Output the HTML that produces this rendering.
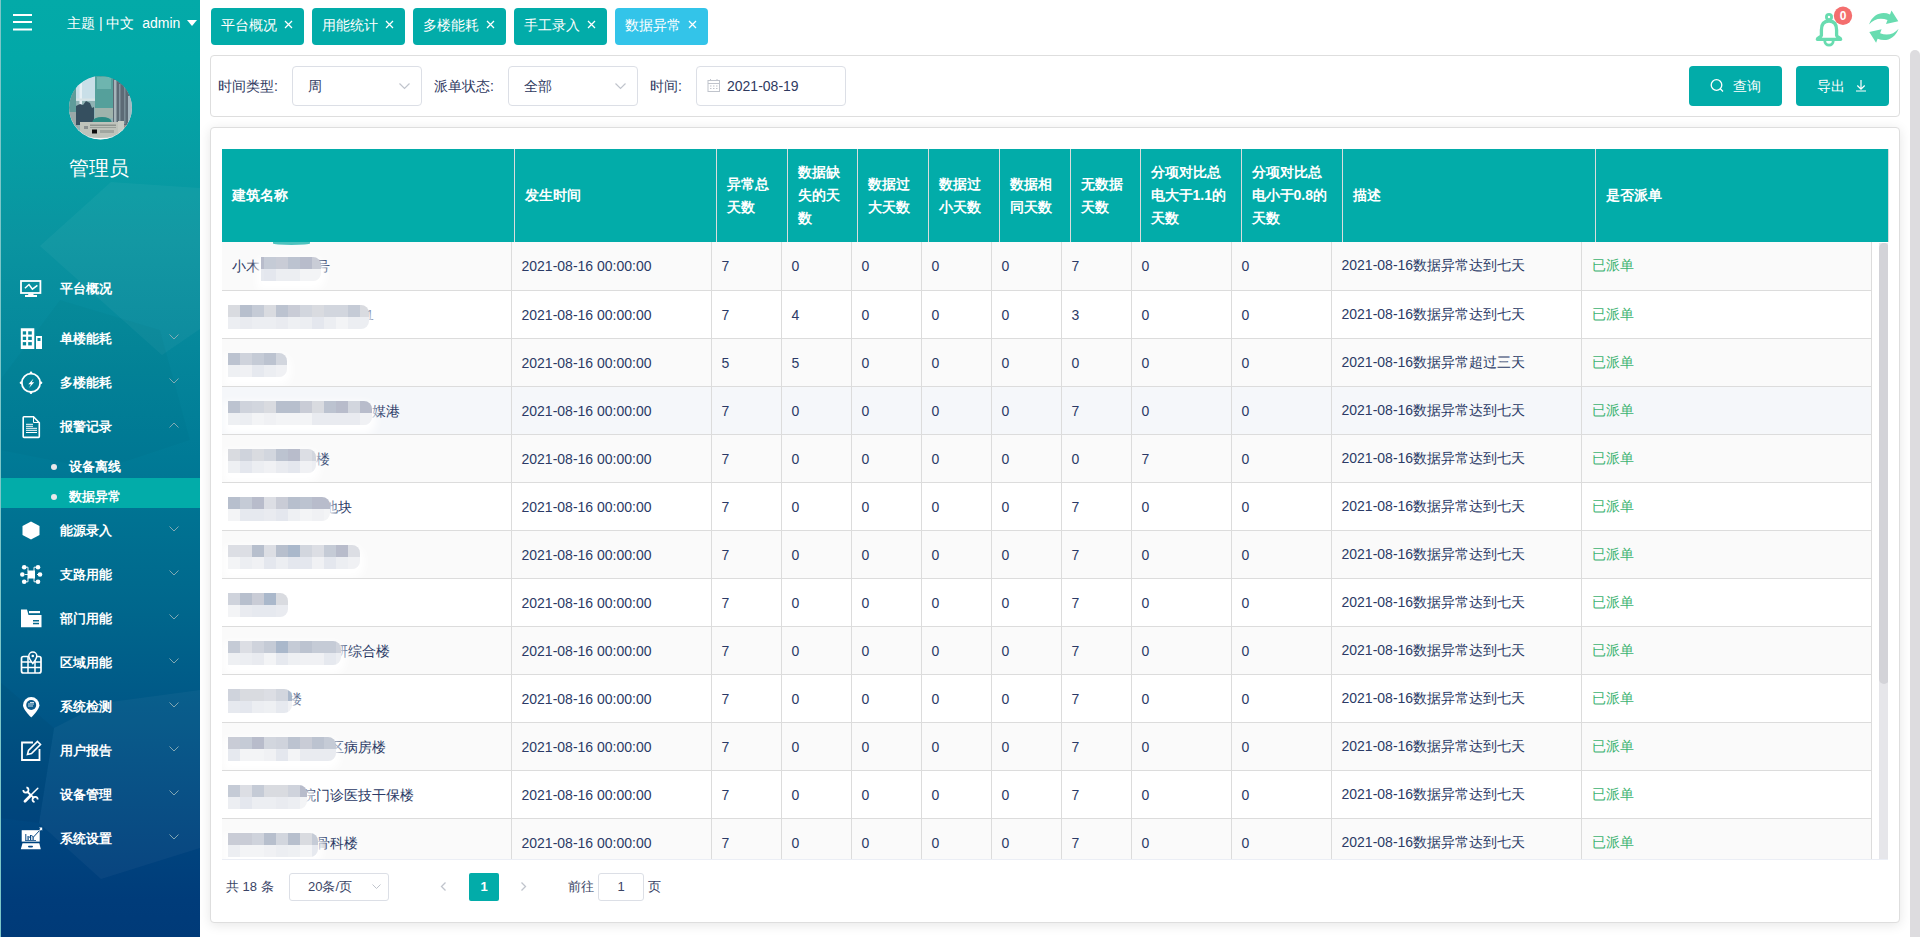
<!DOCTYPE html>
<html><head><meta charset="utf-8">
<style>
*{box-sizing:border-box;margin:0;padding:0}
html,body{width:1920px;height:937px;overflow:hidden;background:#fff;font-family:"Liberation Sans",sans-serif;color:#333}
.abs{position:absolute}
#side{position:absolute;left:0;top:0;width:200px;height:937px;background:linear-gradient(180deg,#03aaa8 0px,#02a8a8 60px,#0a94a0 240px,#007a96 457px,#00668c 615px,#004f84 760px,#003c7a 900px,#003a78 937px);overflow:hidden;border-left:1px solid #7cc6c8}
#side .t{position:absolute;color:#fff;font-size:13px;line-height:16px;white-space:nowrap;font-weight:bold}
.mi{position:absolute;left:0;width:200px;height:20px}
.mi .lab{position:absolute;left:60px;top:0;color:#fff;font-size:13px;line-height:20px;white-space:nowrap}
.mi svg.ic{position:absolute;left:20px;top:-1px}
.mi .chev{position:absolute;left:170px;top:5px;width:8px;height:8px}
.tab{position:absolute;top:8px;height:37px;border-radius:4px;background:#02aca9;color:#fff;font-size:14px;line-height:35px;padding-left:10px;white-space:nowrap}
.tab .x{position:absolute;top:0;font-size:13px}
.card{position:absolute;background:#fff;border:1px solid #dedede;border-radius:4px}
.lbl{position:absolute;top:77px;font-size:14px;line-height:18px;color:#2f3a5f;white-space:nowrap}
.inp{position:absolute;top:66px;height:40px;border:1px solid #dcdfe6;border-radius:4px;font-size:14px;color:#2f3a5f;line-height:38px;white-space:nowrap}
.btn{position:absolute;top:66px;height:40px;border-radius:4px;background:#02aca9;color:#fff;font-size:14px;line-height:40px;white-space:nowrap}
table{border-collapse:collapse;table-layout:fixed}
#th{position:absolute;left:222px;top:149px;width:1666px;height:93px}
#th td{background:#02aca9;color:#fff;font-weight:bold;font-size:14px;line-height:23px;border-right:1px solid #d9dddd;padding:0 10px;vertical-align:middle;height:93px}
#tb{position:absolute;left:0;top:0;width:1649px}
#tb td{font-size:14px;color:#2b3a66;height:48px;border-bottom:1px solid #dcdcdc;border-right:1px solid #dcdcdc;padding:1px 10px 0 10px;white-space:nowrap;overflow:hidden}
#tb tr:nth-child(odd) td{background:#fafafa}
#tb td.g{color:#3cb371}
#tb td.c1{position:relative}
.nm{position:absolute;top:1px;line-height:47px}
.mz{position:absolute;top:14px;height:24px;display:block;border-radius:0 8px 8px 0;overflow:hidden;box-shadow:0 5px 8px 4px rgba(255,255,255,1)}
.mz i{position:absolute;top:0;height:12px;display:block}
#tb tr.hv td{background:#f5f7fa}
#tb tr:first-child .mz{top:15px}
</style></head><body>
<div id="side">
  <svg class="abs" style="left:-1px;top:0" width="200" height="937" viewBox="0 0 200 937">
    <!-- background facets -->
    <polygon points="40,246 111,182 200,188 200,329 162,355" fill="#ffffff" opacity="0.04"/>
    <polygon points="0,380 60,300 160,330 190,440 100,470 0,450" fill="#000000" opacity="0.02"/>
    <polygon points="54,728 103,703 200,690 200,848 101,879 39,823" fill="#ffffff" opacity="0.035"/>
    <polygon points="0,682 54,728 39,823 0,818" fill="#000000" opacity="0.03"/>
    <!-- hamburger -->
    <rect x="13" y="14" width="19" height="2" fill="#fff"/>
    <rect x="13" y="21" width="19" height="2" fill="#fff"/>
    <rect x="13" y="28.5" width="19" height="2" fill="#fff"/>
    <!-- admin caret -->
    <polygon points="187,20 197,20 192,26" fill="#fff"/>
    <!-- avatar -->
    <defs><filter id="bl" x="-5%" y="-5%" width="110%" height="110%"><feGaussianBlur stdDeviation="0.7"/></filter><clipPath id="av"><circle cx="100.5" cy="107.5" r="31.5"/></clipPath></defs>
    <circle cx="100.5" cy="108" r="31.4" fill="#f4f8f8"/>
    <g clip-path="url(#av)"><g filter="url(#bl)">
      <rect x="68" y="75" width="66" height="66" fill="#8fb2b4"/>
      <rect x="68" y="75" width="8" height="40" fill="#5f9c9a"/>
      <rect x="68" y="112" width="10" height="30" fill="#9aa8a8"/>
      <rect x="76" y="75" width="19" height="26" fill="#c9dfe8"/>
      <rect x="79.5" y="80" width="2.5" height="45" fill="#e6f0f4"/>
      <rect x="76" y="98.5" width="19" height="2" fill="#d8e4e6"/>
      <path d="M76,125 V106 l4,-2 l3,1 l3,-4 l4,2 l2,5 l2,-1 V125z" fill="#34505e"/>
      <rect x="95" y="75" width="18" height="36" fill="#55a09b"/>
      <rect x="97" y="77" width="14" height="12" fill="#79bdb8" opacity="0.7"/>
      <rect x="95" y="108" width="18" height="10" fill="#9fb3ac"/>
      <rect x="113" y="75" width="20" height="50" fill="#5b6b74"/>
      <rect x="114" y="80" width="2.5" height="45" fill="#a6b4ba"/>
      <rect x="119" y="84" width="1.5" height="40" fill="#8496a0"/>
      <rect x="124" y="84" width="1.5" height="40" fill="#7a8c96"/>
      <rect x="128" y="96" width="4" height="28" fill="#a4b8c0"/>
      <ellipse cx="102" cy="121.5" rx="9.5" ry="4.5" fill="#2b8a84"/>
      <rect x="80" y="122" width="38" height="16" fill="#bfc3bb"/>
      <rect x="90" y="124.5" width="26" height="1.5" fill="#8e948e"/>
      <rect x="90" y="127" width="26" height="1" fill="#9aa09a"/>
      <rect x="84" y="126" width="4" height="3" fill="#8a9090"/>
      <rect x="92" y="129.5" width="5" height="4" fill="#111"/>
      <rect x="100" y="130" width="14" height="3" fill="#a0a6a0"/>
      <rect x="118" y="121" width="6" height="12" fill="#c8ccc4"/>
      <rect x="124" y="125" width="5" height="6" fill="#b06060" opacity="0.5"/>
    </g></g>
    <path d="M86,136.5 Q100.5,142 115,136.5 Q100.5,139.5 86,136.5z" fill="#fff" opacity="0.9"/>
    <!-- icon 1 monitor -->
    <rect x="21" y="281" width="19.4" height="12" fill="none" stroke="#fff" stroke-width="1.8"/>
    <polyline points="24.9,288.2 29,284.5 32.4,289.2 37.4,285.3" fill="none" stroke="#fff" stroke-width="1.5"/>
    <rect x="28.2" y="293.5" width="5.3" height="2" fill="#fff"/>
    <rect x="25" y="295" width="12" height="2" fill="#fff"/>
    <!-- icon 2 building -->
    <path d="M20.8,328.3h13.5v20.7h-13.5z M36,336h6v13h-6z" fill="#fff"/>
    <g fill="#07879a">
      <rect x="22.8" y="331.3" width="3.3" height="3.3"/><rect x="28.2" y="331.3" width="3.6" height="3.3"/>
      <rect x="22.8" y="336.7" width="3.3" height="3.3"/><rect x="28.2" y="336.7" width="3.6" height="3.3"/>
      <rect x="22.8" y="342.1" width="3.3" height="3.3"/><rect x="28.2" y="342.1" width="3.6" height="3.3"/>
      <rect x="37.5" y="338" width="3" height="3"/>
    </g>
    <!-- icon 3 circle bolt -->
    <circle cx="31" cy="382.8" r="9.2" fill="none" stroke="#fff" stroke-width="1.8"/>
    <circle cx="31" cy="372.8" r="1.3" fill="#fff"/><circle cx="31" cy="392.8" r="1.3" fill="#fff"/>
    <circle cx="21" cy="382.8" r="1.3" fill="#fff"/><circle cx="41" cy="382.8" r="1.3" fill="#fff"/>
    <polygon points="33.6,378.5 28.3,384.2 30.9,384.2 29,388 34.2,382.2 31.6,382.2" fill="#fff"/>
    <!-- icon 4 document -->
    <path d="M24,416.8h9.5l5.8,6v13.8a0.8,0.8 0 0 1 -0.8,0.8h-14.5a0.8,0.8 0 0 1 -0.8,-0.8v-19a0.8,0.8 0 0 1 0.8,-0.8z" fill="none" stroke="#fff" stroke-width="1.6"/>
    <path d="M33.5,417v5.5h5.5" fill="none" stroke="#fff" stroke-width="1"/>
    <g stroke="#fff" stroke-width="1"><line x1="26" y1="424.3" x2="33" y2="424.3"/><line x1="26" y1="426.3" x2="33" y2="426.3"/><line x1="26" y1="428.3" x2="37" y2="428.3"/><line x1="26" y1="430.3" x2="37" y2="430.3"/><line x1="26" y1="432.5" x2="37" y2="432.5"/></g>
    <!-- submenu active bg -->
    <rect x="0" y="478" width="200" height="30" fill="#02aca9"/>
    <circle cx="54" cy="467" r="3" fill="#e8e8ea"/>
    <circle cx="54" cy="497" r="3" fill="#e8e8ea"/>
    <!-- icon 5 hexagon -->
    <polygon points="31,521.5 39.5,526 39.5,535 31,539.5 22.5,535 22.5,526" fill="#fff"/>
    <!-- icon 6 network -->
    <g fill="#fff">
      <rect x="27.5" y="570.5" width="7.5" height="8"/>
      <circle cx="24.2" cy="567.2" r="2.3"/><circle cx="38" cy="567.2" r="2.3"/>
      <circle cx="22.3" cy="574.5" r="2.3"/><circle cx="40" cy="574.5" r="2.3"/>
      <circle cx="24.2" cy="581.8" r="2.3"/><circle cx="38" cy="581.8" r="2.3"/>
    </g>
    <path d="M25,567.2h3v4 M37,567.2h-3v4 M25,574.5h3 M37,574.5h3 M25,581.8h3v-4 M37,581.8h-3v-4" fill="none" stroke="#fff" stroke-width="0.9"/>
    <!-- icon 7 folder -->
    <path d="M21,609.5h6l1.5,5.5h13v12.3h-20.5z" fill="#fff"/>
    <rect x="29" y="611" width="11" height="2.2" fill="#fff"/>
    <rect x="33" y="620" width="6" height="1.5" fill="#086b8e"/><rect x="33" y="622.8" width="6" height="1.5" fill="#086b8e"/>
    <!-- icon 8 grid pin -->
    <rect x="21.5" y="656.5" width="19.5" height="16.5" rx="2" fill="none" stroke="#fff" stroke-width="1.7"/>
    <g stroke="#fff" stroke-width="1.5"><line x1="28" y1="657" x2="28" y2="673"/><line x1="35" y1="657" x2="35" y2="673"/><line x1="21.5" y1="662" x2="41" y2="662"/><line x1="21.5" y1="667.5" x2="41" y2="667.5"/></g>
    <path d="M32.8,652 a4,4 0 0 1 4,4 c0,2.5 -4,7.5 -4,7.5 c0,0 -4,-5 -4,-7.5 a4,4 0 0 1 4,-4z" fill="#075f8c" stroke="#fff" stroke-width="1.5"/>
    <circle cx="32.8" cy="656" r="1.3" fill="#fff"/>
    <!-- icon 9 location pin -->
    <path d="M31.2,697 a8.2,8.2 0 0 1 8.2,8.2 c0,4.5 -8.2,12.2 -8.2,12.2 c0,0 -8.2,-7.7 -8.2,-12.2 a8.2,8.2 0 0 1 8.2,-8.2z" fill="#fff"/>
    <circle cx="31.2" cy="705" r="5" fill="#0b5a8a"/>
    <path d="M28,704h6 M28,706h5 M30,702.5h4" stroke="#fff" stroke-width="0.8"/>
    <!-- icon 10 edit -->
    <path d="M33,742.5h-11v17.5h17.5v-11" fill="none" stroke="#fff" stroke-width="1.8"/>
    <path d="M37.5,741.5l3,3l-9,9l-4,1l1,-4z" fill="none" stroke="#fff" stroke-width="1.6"/>
    <!-- icon 11 tools -->
    <path d="M26.8,791.3 L34.2,798.4" stroke="#fff" stroke-width="1.9"/>
    <path d="M23.3,789.9 A2.6,2.6 0 1 0 26.4,787.4" fill="none" stroke="#fff" stroke-width="1.7"/>
    <path d="M37.7,799.5 A2.6,2.6 0 1 0 34.6,802.0" fill="none" stroke="#fff" stroke-width="1.7"/>
    <path d="M37.8,788.3 L31,795" stroke="#fff" stroke-width="1.5" stroke-linecap="round"/>
    <path d="M30.2,796 L25,801.2" stroke="#fff" stroke-width="2.8" stroke-linecap="round"/>
    <!-- icon 12 monitor chart -->
    <rect x="21.7" y="830.2" width="18" height="11.4" fill="#fff"/>
    <g fill="#0a4a85">
      <rect x="25.3" y="834" width="1" height="6"/><rect x="27.5" y="836" width="1.2" height="4"/><rect x="30" y="835" width="1.2" height="5"/><rect x="32.5" y="837" width="1.2" height="3"/>
      <rect x="25" y="840" width="11" height="0.8"/>
    </g>
    <path d="M29,837.5 L31.5,835.5 L33.5,837 L40,830" fill="none" stroke="#0a4a85" stroke-width="1"/>
    <path d="M39.5,830.5 L41.2,828.8" stroke="#fff" stroke-width="1.2"/>
    <polygon points="39,827.5 42.2,827.5 42.2,830.7" fill="#fff"/>
    <polygon points="22.5,843.3 39.3,843.3 40.8,849.3 20.8,849.3" fill="#fff"/>
    <rect x="28" y="845.8" width="5" height="1.6" rx="0.8" fill="#0a4a85"/>
    <!-- chevrons -->
    <g fill="none" stroke="#8fb0b8" stroke-width="1" opacity="0.9">
      <polyline points="169.5,334.5 174,339 178.5,334.5"/>
      <polyline points="169.5,378.5 174,383 178.5,378.5"/>
      <polyline points="169.5,427.5 174,423 178.5,427.5"/>
      <polyline points="169.5,526.5 174,531 178.5,526.5"/>
      <polyline points="169.5,570.5 174,575 178.5,570.5"/>
      <polyline points="169.5,614.5 174,619 178.5,614.5"/>
      <polyline points="169.5,658.5 174,663 178.5,658.5"/>
      <polyline points="169.5,702.5 174,707 178.5,702.5"/>
      <polyline points="169.5,746.5 174,751 178.5,746.5"/>
      <polyline points="169.5,790.5 174,795 178.5,790.5"/>
      <polyline points="169.5,834.5 174,839 178.5,834.5"/>
    </g>
  </svg>
  <div class="t" style="left:66px;top:14px;font-size:14px;line-height:18px;font-weight:normal">主题 | 中文&nbsp;&nbsp;admin</div>
  <div class="t" style="left:68px;top:156px;font-size:20px;line-height:24px;font-weight:normal">管理员</div>
  <div class="t" style="left:59px;top:281px">平台概况</div>
  <div class="t" style="left:59px;top:331px">单楼能耗</div>
  <div class="t" style="left:59px;top:375px">多楼能耗</div>
  <div class="t" style="left:59px;top:419px">报警记录</div>
  <div class="t" style="left:68px;top:459px">设备离线</div>
  <div class="t" style="left:68px;top:489px">数据异常</div>
  <div class="t" style="left:59px;top:523px">能源录入</div>
  <div class="t" style="left:59px;top:567px">支路用能</div>
  <div class="t" style="left:59px;top:611px">部门用能</div>
  <div class="t" style="left:59px;top:655px">区域用能</div>
  <div class="t" style="left:59px;top:699px">系统检测</div>
  <div class="t" style="left:59px;top:743px">用户报告</div>
  <div class="t" style="left:59px;top:787px">设备管理</div>
  <div class="t" style="left:59px;top:831px">系统设置</div>
</div>
<!-- tabs -->
<div class="tab" style="left:211px;width:93px">平台概况<svg class="x" style="left:73px;top:12px" width="9" height="9" viewBox="0 0 9 9"><path d="M1,1L8,8M8,1L1,8" stroke="#fff" stroke-width="1.3"/></svg></div>
<div class="tab" style="left:312px;width:93px">用能统计<svg class="x" style="left:73px;top:12px" width="9" height="9" viewBox="0 0 9 9"><path d="M1,1L8,8M8,1L1,8" stroke="#fff" stroke-width="1.3"/></svg></div>
<div class="tab" style="left:413px;width:93px">多楼能耗<svg class="x" style="left:73px;top:12px" width="9" height="9" viewBox="0 0 9 9"><path d="M1,1L8,8M8,1L1,8" stroke="#fff" stroke-width="1.3"/></svg></div>
<div class="tab" style="left:514px;width:93px">手工录入<svg class="x" style="left:73px;top:12px" width="9" height="9" viewBox="0 0 9 9"><path d="M1,1L8,8M8,1L1,8" stroke="#fff" stroke-width="1.3"/></svg></div>
<div class="tab" style="left:615px;width:93px;background:#33c4e9">数据异常<svg class="x" style="left:73px;top:12px" width="9" height="9" viewBox="0 0 9 9"><path d="M1,1L8,8M8,1L1,8" stroke="#fff" stroke-width="1.3"/></svg></div>

<!-- filter card -->
<div class="card" style="left:210px;top:55px;width:1690px;height:62px"></div>
<div class="lbl" style="left:218px">时间类型:</div>
<div class="inp" style="left:292px;width:130px;padding-left:15px">周</div>
<div class="lbl" style="left:434px">派单状态:</div>
<div class="inp" style="left:508px;width:130px;padding-left:15px">全部</div>
<div class="lbl" style="left:650px">时间:</div>
<div class="inp" style="left:696px;width:150px;padding-left:30px">2021-08-19</div>
<div class="btn" style="left:1689px;width:93px;padding-left:44px">查询</div>
<div class="btn" style="left:1796px;width:93px;padding-left:21px">导出</div>
<svg class="abs" style="left:0;top:0" width="1920" height="130" viewBox="0 0 1920 130">
  <!-- select arrows -->
  <polyline points="399.5,83.5 404.5,88.5 409.5,83.5" fill="none" stroke="#c0c4cc" stroke-width="1.2"/>
  <polyline points="615.5,83.5 620.5,88.5 625.5,83.5" fill="none" stroke="#c0c4cc" stroke-width="1.2"/>
  <!-- calendar -->
  <rect x="708" y="80.5" width="11.5" height="11" fill="none" stroke="#c0c4cc" stroke-width="1"/>
  <line x1="708" y1="83.5" x2="719.5" y2="83.5" stroke="#c0c4cc" stroke-width="1"/>
  <line x1="710.5" y1="79" x2="710.5" y2="81" stroke="#c0c4cc"/><line x1="717" y1="79" x2="717" y2="81" stroke="#c0c4cc"/>
  <g fill="#c0c4cc"><rect x="710" y="85.5" width="1.5" height="1"/><rect x="713" y="85.5" width="1.5" height="1"/><rect x="716" y="85.5" width="1.5" height="1"/><rect x="710" y="88" width="1.5" height="1"/><rect x="713" y="88" width="1.5" height="1"/><rect x="716" y="88" width="1.5" height="1"/></g>
  <!-- search icon -->
  <circle cx="1716.5" cy="85" r="5.3" fill="none" stroke="#fff" stroke-width="1.3"/>
  <line x1="1720.3" y1="88.8" x2="1723" y2="91.5" stroke="#fff" stroke-width="1.3"/>
  <!-- download icon -->
  <path d="M1861,80v9 M1857.3,85.5l3.7,3.7l3.7,-3.7 M1856,91h10" fill="none" stroke="#fff" stroke-width="1.2"/>
  <!-- bell -->
  <path d="M1829,21 C1824,21 1821.4,24.5 1821.4,30 L1821.4,35.5 C1821.4,37 1817.3,38 1817.3,39.3 L1840.7,39.3 C1840.7,38 1836.6,37 1836.6,35.5 L1836.6,30 C1836.6,24.5 1834,21 1829,21 Z" fill="none" stroke="#68dcb0" stroke-width="3.3" stroke-linejoin="round"/>
  <circle cx="1829" cy="17" r="2.6" fill="none" stroke="#68dcb0" stroke-width="2.8"/>
  <path d="M1824.8,41 a4.2,4.2 0 0 0 8.4,0" fill="none" stroke="#68dcb0" stroke-width="2.8"/>
  <circle cx="1843" cy="15.7" r="9.2" fill="#f46e6e"/>
  <!-- refresh -->
  <path d="M1869,24.5 C1873,14 1882,11 1890,14.5 L1891.5,10.5 L1898.3,21.3 L1886,24 L1887.5,20 C1881,17.5 1874,18.5 1869,24.5 Z" fill="#68dcb0"/>
  <path d="M1898.6,28.7 C1894.6,39.2 1885.6,42.2 1877.6,38.7 L1876.1,42.7 L1869.3,31.9 L1881.6,29.2 L1880.1,33.2 C1886.6,35.7 1893.6,34.7 1898.6,28.7 Z" fill="#68dcb0"/>
</svg>
<div class="abs" style="left:1834px;top:7px;width:18px;text-align:center;color:#fff;font-size:12px;font-weight:bold;line-height:18px">0</div>
<!-- page scrollbar -->
<div class="abs" style="left:1910px;top:50px;width:10px;height:900px;border-radius:5px;background:#dddcdf"></div>
<!-- table card -->
<div class="card" style="left:210px;top:127px;width:1690px;height:796px;box-shadow:0 2px 12px rgba(0,0,0,.1)"></div>
<table id="th"><colgroup><col style="width:292px"><col style="width:202px"><col style="width:71px"><col style="width:70px"><col style="width:71px"><col style="width:71px"><col style="width:71px"><col style="width:70px"><col style="width:101px"><col style="width:101px"><col style="width:253px"><col style="width:293px"></colgroup>
<tr><td>建筑名称</td><td>发生时间</td><td>异常总天数</td><td>数据缺失的天数</td><td>数据过大天数</td><td>数据过小天数</td><td>数据相同天数</td><td>无数据天数</td><td>分项对比总电大于1.1的天数</td><td>分项对比总电小于0.8的天数</td><td>描述</td><td>是否派单</td></tr>
</table>
<div id="bw" style="position:absolute;left:222px;top:242px;width:1666px;height:618px;overflow:hidden;border-bottom:1px solid #ebeef5">
<table id="tb"><colgroup><col style="width:289px"><col style="width:200px"><col style="width:70px"><col style="width:70px"><col style="width:70px"><col style="width:70px"><col style="width:70px"><col style="width:70px"><col style="width:100px"><col style="width:100px"><col style="width:250px"><col style="width:290px"></colgroup>
<tbody>
<!--ROWS-->
<tr><td class="c1"><span class="nm" style="left:10px">小木</span><span class="nm" style="left:94px">号</span><b class="mz" style="left:39px;width:60px"><i style="left:0px;width:3px;background:#b8bccb"></i><i style="left:0px;top:12px;width:3px;background:#e6e9ef"></i><i style="left:3px;width:12px;background:#c5cbd6"></i><i style="left:3px;top:12px;width:12px;background:#e4e7ee"></i><i style="left:15px;width:12px;background:#c9ccd6"></i><i style="left:15px;top:12px;width:12px;background:#eceef2"></i><i style="left:27px;width:12px;background:#bcc3d0"></i><i style="left:27px;top:12px;width:12px;background:#eceef2"></i><i style="left:39px;width:12px;background:#b8bccb"></i><i style="left:39px;top:12px;width:12px;background:#f3f4f6"></i><i style="left:51px;width:9px;background:#c9ccd6"></i><i style="left:51px;top:12px;width:9px;background:#f3f4f6"></i></b></td><td>2021-08-16 00:00:00</td><td>7</td><td>0</td><td>0</td><td>0</td><td>0</td><td>7</td><td>0</td><td>0</td><td>2021-08-16数据异常达到七天</td><td class="g">已派单</td></tr>
<tr><td class="c1"><span class="nm" style="left:144px">1</span><b class="mz" style="left:6px;width:141px"><i style="left:0px;width:12px;background:#d9dbe0"></i><i style="left:0px;top:12px;width:12px;background:#eceef2"></i><i style="left:12px;width:12px;background:#b7bfcd"></i><i style="left:12px;top:12px;width:12px;background:#e9ebf0"></i><i style="left:24px;width:12px;background:#c5cbd6"></i><i style="left:24px;top:12px;width:12px;background:#eceef2"></i><i style="left:36px;width:12px;background:#d9dbe0"></i><i style="left:36px;top:12px;width:12px;background:#eceef2"></i><i style="left:48px;width:12px;background:#bcc3d0"></i><i style="left:48px;top:12px;width:12px;background:#e9ebf0"></i><i style="left:60px;width:12px;background:#c9ccd6"></i><i style="left:60px;top:12px;width:12px;background:#eef0f3"></i><i style="left:72px;width:12px;background:#d2d6de"></i><i style="left:72px;top:12px;width:12px;background:#eceef2"></i><i style="left:84px;width:12px;background:#d9dbe0"></i><i style="left:84px;top:12px;width:12px;background:#e4e7ee"></i><i style="left:96px;width:12px;background:#d2d6de"></i><i style="left:96px;top:12px;width:12px;background:#eceef2"></i><i style="left:108px;width:12px;background:#d2d6de"></i><i style="left:108px;top:12px;width:12px;background:#f3f4f6"></i><i style="left:120px;width:12px;background:#c5cbd6"></i><i style="left:120px;top:12px;width:12px;background:#eceef2"></i><i style="left:132px;width:9px;background:#d9dbe0"></i><i style="left:132px;top:12px;width:9px;background:#eceef2"></i></b></td><td>2021-08-16 00:00:00</td><td>7</td><td>4</td><td>0</td><td>0</td><td>0</td><td>3</td><td>0</td><td>0</td><td>2021-08-16数据异常达到七天</td><td class="g">已派单</td></tr>
<tr><td class="c1"><b class="mz" style="left:6px;width:59px"><i style="left:0px;width:12px;background:#bcc3d0"></i><i style="left:0px;top:12px;width:12px;background:#eef0f3"></i><i style="left:12px;width:12px;background:#cfd3dc"></i><i style="left:12px;top:12px;width:12px;background:#f0f1f4"></i><i style="left:24px;width:12px;background:#c5cbd6"></i><i style="left:24px;top:12px;width:12px;background:#e6e9ef"></i><i style="left:36px;width:12px;background:#bcc3d0"></i><i style="left:36px;top:12px;width:12px;background:#eceef2"></i><i style="left:48px;width:11px;background:#d2d6de"></i><i style="left:48px;top:12px;width:11px;background:#f0f1f4"></i></b></td><td>2021-08-16 00:00:00</td><td>5</td><td>5</td><td>0</td><td>0</td><td>0</td><td>0</td><td>0</td><td>0</td><td>2021-08-16数据异常超过三天</td><td class="g">已派单</td></tr>
<tr class="hv"><td class="c1"><span class="nm" style="left:150px">媒港</span><b class="mz" style="left:6px;width:144px"><i style="left:0px;width:12px;background:#bcc3d0"></i><i style="left:0px;top:12px;width:12px;background:#eef0f3"></i><i style="left:12px;width:12px;background:#cfd3dc"></i><i style="left:12px;top:12px;width:12px;background:#eceef2"></i><i style="left:24px;width:12px;background:#d2d6de"></i><i style="left:24px;top:12px;width:12px;background:#f3f4f6"></i><i style="left:36px;width:12px;background:#d9dbe0"></i><i style="left:36px;top:12px;width:12px;background:#f0f1f4"></i><i style="left:48px;width:12px;background:#b7bfcd"></i><i style="left:48px;top:12px;width:12px;background:#f3f4f6"></i><i style="left:60px;width:12px;background:#b7bfcd"></i><i style="left:60px;top:12px;width:12px;background:#f3f4f6"></i><i style="left:72px;width:12px;background:#c9ccd6"></i><i style="left:72px;top:12px;width:12px;background:#f3f4f6"></i><i style="left:84px;width:12px;background:#d9dbe0"></i><i style="left:84px;top:12px;width:12px;background:#e9ebf0"></i><i style="left:96px;width:12px;background:#bcc3d0"></i><i style="left:96px;top:12px;width:12px;background:#e9ebf0"></i><i style="left:108px;width:12px;background:#b8bccb"></i><i style="left:108px;top:12px;width:12px;background:#e9ebf0"></i><i style="left:120px;width:12px;background:#d2d6de"></i><i style="left:120px;top:12px;width:12px;background:#e9ebf0"></i><i style="left:132px;width:12px;background:#b8bccb"></i><i style="left:132px;top:12px;width:12px;background:#f0f1f4"></i></b></td><td>2021-08-16 00:00:00</td><td>7</td><td>0</td><td>0</td><td>0</td><td>0</td><td>7</td><td>0</td><td>0</td><td>2021-08-16数据异常达到七天</td><td class="g">已派单</td></tr>
<tr><td class="c1"><span class="nm" style="left:94px">楼</span><b class="mz" style="left:6px;width:88px"><i style="left:0px;width:12px;background:#d9dbe0"></i><i style="left:0px;top:12px;width:12px;background:#eef0f3"></i><i style="left:12px;width:12px;background:#cfd3dc"></i><i style="left:12px;top:12px;width:12px;background:#e4e7ee"></i><i style="left:24px;width:12px;background:#d9dbe0"></i><i style="left:24px;top:12px;width:12px;background:#eceef2"></i><i style="left:36px;width:12px;background:#d2d6de"></i><i style="left:36px;top:12px;width:12px;background:#f0f1f4"></i><i style="left:48px;width:12px;background:#bcc3d0"></i><i style="left:48px;top:12px;width:12px;background:#e9ebf0"></i><i style="left:60px;width:12px;background:#b8bccb"></i><i style="left:60px;top:12px;width:12px;background:#e4e7ee"></i><i style="left:72px;width:12px;background:#dcdee4"></i><i style="left:72px;top:12px;width:12px;background:#f0f1f4"></i><i style="left:84px;width:4px;background:#d2d6de"></i><i style="left:84px;top:12px;width:4px;background:#eceef2"></i></b></td><td>2021-08-16 00:00:00</td><td>7</td><td>0</td><td>0</td><td>0</td><td>0</td><td>0</td><td>7</td><td>0</td><td>2021-08-16数据异常达到七天</td><td class="g">已派单</td></tr>
<tr><td class="c1"><span class="nm" style="left:102px">地块</span><b class="mz" style="left:6px;width:102px"><i style="left:0px;width:12px;background:#b7bfcd"></i><i style="left:0px;top:12px;width:12px;background:#f3f4f6"></i><i style="left:12px;width:12px;background:#c5cbd6"></i><i style="left:12px;top:12px;width:12px;background:#e6e9ef"></i><i style="left:24px;width:12px;background:#b8bccb"></i><i style="left:24px;top:12px;width:12px;background:#e6e9ef"></i><i style="left:36px;width:12px;background:#dcdee4"></i><i style="left:36px;top:12px;width:12px;background:#e9ebf0"></i><i style="left:48px;width:12px;background:#c9ccd6"></i><i style="left:48px;top:12px;width:12px;background:#e4e7ee"></i><i style="left:60px;width:12px;background:#b7bfcd"></i><i style="left:60px;top:12px;width:12px;background:#eef0f3"></i><i style="left:72px;width:12px;background:#bcc3d0"></i><i style="left:72px;top:12px;width:12px;background:#f3f4f6"></i><i style="left:84px;width:12px;background:#b8bccb"></i><i style="left:84px;top:12px;width:12px;background:#f0f1f4"></i><i style="left:96px;width:6px;background:#b8bccb"></i><i style="left:96px;top:12px;width:6px;background:#f3f4f6"></i></b></td><td>2021-08-16 00:00:00</td><td>7</td><td>0</td><td>0</td><td>0</td><td>0</td><td>7</td><td>0</td><td>0</td><td>2021-08-16数据异常达到七天</td><td class="g">已派单</td></tr>
<tr><td class="c1"><b class="mz" style="left:6px;width:132px"><i style="left:0px;width:12px;background:#dcdee4"></i><i style="left:0px;top:12px;width:12px;background:#f3f4f6"></i><i style="left:12px;width:12px;background:#dcdee4"></i><i style="left:12px;top:12px;width:12px;background:#eceef2"></i><i style="left:24px;width:12px;background:#b7bfcd"></i><i style="left:24px;top:12px;width:12px;background:#f0f1f4"></i><i style="left:36px;width:12px;background:#dcdee4"></i><i style="left:36px;top:12px;width:12px;background:#e4e7ee"></i><i style="left:48px;width:12px;background:#b7bfcd"></i><i style="left:48px;top:12px;width:12px;background:#eceef2"></i><i style="left:60px;width:12px;background:#aab8cb"></i><i style="left:60px;top:12px;width:12px;background:#e4e7ee"></i><i style="left:72px;width:12px;background:#d2d6de"></i><i style="left:72px;top:12px;width:12px;background:#e4e7ee"></i><i style="left:84px;width:12px;background:#dcdee4"></i><i style="left:84px;top:12px;width:12px;background:#f0f1f4"></i><i style="left:96px;width:12px;background:#c5cbd6"></i><i style="left:96px;top:12px;width:12px;background:#e4e7ee"></i><i style="left:108px;width:12px;background:#b8bccb"></i><i style="left:108px;top:12px;width:12px;background:#eceef2"></i><i style="left:120px;width:12px;background:#dcdee4"></i><i style="left:120px;top:12px;width:12px;background:#f0f1f4"></i></b></td><td>2021-08-16 00:00:00</td><td>7</td><td>0</td><td>0</td><td>0</td><td>0</td><td>7</td><td>0</td><td>0</td><td>2021-08-16数据异常达到七天</td><td class="g">已派单</td></tr>
<tr><td class="c1"><b class="mz" style="left:6px;width:60px"><i style="left:0px;width:12px;background:#cfd3dc"></i><i style="left:0px;top:12px;width:12px;background:#f3f4f6"></i><i style="left:12px;width:12px;background:#b7bfcd"></i><i style="left:12px;top:12px;width:12px;background:#e9ebf0"></i><i style="left:24px;width:12px;background:#c9ccd6"></i><i style="left:24px;top:12px;width:12px;background:#e6e9ef"></i><i style="left:36px;width:12px;background:#aab8cb"></i><i style="left:36px;top:12px;width:12px;background:#e6e9ef"></i><i style="left:48px;width:12px;background:#d9dbe0"></i><i style="left:48px;top:12px;width:12px;background:#e9ebf0"></i></b></td><td>2021-08-16 00:00:00</td><td>7</td><td>0</td><td>0</td><td>0</td><td>0</td><td>7</td><td>0</td><td>0</td><td>2021-08-16数据异常达到七天</td><td class="g">已派单</td></tr>
<tr><td class="c1"><span class="nm" style="left:112px">研综合楼</span><b class="mz" style="left:6px;width:113px"><i style="left:0px;width:12px;background:#c5cbd6"></i><i style="left:0px;top:12px;width:12px;background:#eef0f3"></i><i style="left:12px;width:12px;background:#dcdee4"></i><i style="left:12px;top:12px;width:12px;background:#eceef2"></i><i style="left:24px;width:12px;background:#cfd3dc"></i><i style="left:24px;top:12px;width:12px;background:#e9ebf0"></i><i style="left:36px;width:12px;background:#c5cbd6"></i><i style="left:36px;top:12px;width:12px;background:#f3f4f6"></i><i style="left:48px;width:12px;background:#aab8cb"></i><i style="left:48px;top:12px;width:12px;background:#e6e9ef"></i><i style="left:60px;width:12px;background:#c5cbd6"></i><i style="left:60px;top:12px;width:12px;background:#eef0f3"></i><i style="left:72px;width:12px;background:#bcc3d0"></i><i style="left:72px;top:12px;width:12px;background:#f0f1f4"></i><i style="left:84px;width:12px;background:#c5cbd6"></i><i style="left:84px;top:12px;width:12px;background:#f0f1f4"></i><i style="left:96px;width:12px;background:#c5cbd6"></i><i style="left:96px;top:12px;width:12px;background:#e6e9ef"></i><i style="left:108px;width:5px;background:#cfd3dc"></i><i style="left:108px;top:12px;width:5px;background:#eceef2"></i></b></td><td>2021-08-16 00:00:00</td><td>7</td><td>0</td><td>0</td><td>0</td><td>0</td><td>7</td><td>0</td><td>0</td><td>2021-08-16数据异常达到七天</td><td class="g">已派单</td></tr>
<tr><td class="c1"><span class="nm" style="left:66px">楼</span><b class="mz" style="left:6px;width:64px"><i style="left:0px;width:12px;background:#cfd3dc"></i><i style="left:0px;top:12px;width:12px;background:#e6e9ef"></i><i style="left:12px;width:12px;background:#d9dbe0"></i><i style="left:12px;top:12px;width:12px;background:#e4e7ee"></i><i style="left:24px;width:12px;background:#d9dbe0"></i><i style="left:24px;top:12px;width:12px;background:#eceef2"></i><i style="left:36px;width:12px;background:#dcdee4"></i><i style="left:36px;top:12px;width:12px;background:#eef0f3"></i><i style="left:48px;width:12px;background:#d2d6de"></i><i style="left:48px;top:12px;width:12px;background:#e6e9ef"></i><i style="left:60px;width:4px;background:#aab8cb"></i><i style="left:60px;top:12px;width:4px;background:#f0f1f4"></i></b></td><td>2021-08-16 00:00:00</td><td>7</td><td>0</td><td>0</td><td>0</td><td>0</td><td>7</td><td>0</td><td>0</td><td>2021-08-16数据异常达到七天</td><td class="g">已派单</td></tr>
<tr><td class="c1"><span class="nm" style="left:108px">区病房楼</span><b class="mz" style="left:6px;width:108px"><i style="left:0px;width:12px;background:#c9ccd6"></i><i style="left:0px;top:12px;width:12px;background:#e6e9ef"></i><i style="left:12px;width:12px;background:#c5cbd6"></i><i style="left:12px;top:12px;width:12px;background:#f3f4f6"></i><i style="left:24px;width:12px;background:#b8bccb"></i><i style="left:24px;top:12px;width:12px;background:#f3f4f6"></i><i style="left:36px;width:12px;background:#d2d6de"></i><i style="left:36px;top:12px;width:12px;background:#f0f1f4"></i><i style="left:48px;width:12px;background:#cfd3dc"></i><i style="left:48px;top:12px;width:12px;background:#e4e7ee"></i><i style="left:60px;width:12px;background:#bcc3d0"></i><i style="left:60px;top:12px;width:12px;background:#f3f4f6"></i><i style="left:72px;width:12px;background:#c9ccd6"></i><i style="left:72px;top:12px;width:12px;background:#e9ebf0"></i><i style="left:84px;width:12px;background:#bcc3d0"></i><i style="left:84px;top:12px;width:12px;background:#e9ebf0"></i><i style="left:96px;width:12px;background:#c5cbd6"></i><i style="left:96px;top:12px;width:12px;background:#e9ebf0"></i></b></td><td>2021-08-16 00:00:00</td><td>7</td><td>0</td><td>0</td><td>0</td><td>0</td><td>7</td><td>0</td><td>0</td><td>2021-08-16数据异常达到七天</td><td class="g">已派单</td></tr>
<tr><td class="c1"><span class="nm" style="left:80px">院门诊医技干保楼</span><b class="mz" style="left:6px;width:79px"><i style="left:0px;width:12px;background:#c5cbd6"></i><i style="left:0px;top:12px;width:12px;background:#eceef2"></i><i style="left:12px;width:12px;background:#dcdee4"></i><i style="left:12px;top:12px;width:12px;background:#e4e7ee"></i><i style="left:24px;width:12px;background:#c5cbd6"></i><i style="left:24px;top:12px;width:12px;background:#eceef2"></i><i style="left:36px;width:12px;background:#d9dbe0"></i><i style="left:36px;top:12px;width:12px;background:#eceef2"></i><i style="left:48px;width:12px;background:#d9dbe0"></i><i style="left:48px;top:12px;width:12px;background:#e9ebf0"></i><i style="left:60px;width:12px;background:#cfd3dc"></i><i style="left:60px;top:12px;width:12px;background:#eceef2"></i><i style="left:72px;width:7px;background:#b8bccb"></i><i style="left:72px;top:12px;width:7px;background:#f3f4f6"></i></b></td><td>2021-08-16 00:00:00</td><td>7</td><td>0</td><td>0</td><td>0</td><td>0</td><td>7</td><td>0</td><td>0</td><td>2021-08-16数据异常达到七天</td><td class="g">已派单</td></tr>
<tr><td class="c1"><span class="nm" style="left:94px">骨科楼</span><b class="mz" style="left:6px;width:90px"><i style="left:0px;width:12px;background:#c9ccd6"></i><i style="left:0px;top:12px;width:12px;background:#eceef2"></i><i style="left:12px;width:12px;background:#c9ccd6"></i><i style="left:12px;top:12px;width:12px;background:#f3f4f6"></i><i style="left:24px;width:12px;background:#cfd3dc"></i><i style="left:24px;top:12px;width:12px;background:#f3f4f6"></i><i style="left:36px;width:12px;background:#b7bfcd"></i><i style="left:36px;top:12px;width:12px;background:#f0f1f4"></i><i style="left:48px;width:12px;background:#d2d6de"></i><i style="left:48px;top:12px;width:12px;background:#eceef2"></i><i style="left:60px;width:12px;background:#b7bfcd"></i><i style="left:60px;top:12px;width:12px;background:#eef0f3"></i><i style="left:72px;width:12px;background:#d9dbe0"></i><i style="left:72px;top:12px;width:12px;background:#f3f4f6"></i><i style="left:84px;width:6px;background:#c5cbd6"></i><i style="left:84px;top:12px;width:6px;background:#e6e9ef"></i></b></td><td>2021-08-16 00:00:00</td><td>7</td><td>0</td><td>0</td><td>0</td><td>0</td><td>7</td><td>0</td><td>0</td><td>2021-08-16数据异常达到七天</td><td class="g">已派单</td></tr>
<!--/ROWS-->
</tbody>
</table>
<div style="position:absolute;left:1650px;top:0;width:16px;height:618px;background:#fff"></div>
<div style="position:absolute;left:1657px;top:1px;width:10px;height:617px;background:#e6e6ea"></div>
<div style="position:absolute;left:1657px;top:1px;width:10px;height:441px;border-radius:5px;background:#d3d3d8"></div>
</div>
<div class="abs" style="left:273px;top:242px;width:37px;height:3px;border-radius:0 0 50% 50%;background:rgba(20,175,170,0.75)"></div>
<!-- pagination -->
<div class="abs" style="left:226px;top:878px;font-size:13px;line-height:17px;color:#3a4466;white-space:nowrap">共 18 条</div>
<div class="abs" style="left:289px;top:873px;width:100px;height:28px;border:1px solid #dcdfe6;border-radius:3px;font-size:13px;line-height:26px;color:#3a4466;padding-left:18px;white-space:nowrap">20条/页</div>
<svg class="abs" style="left:0;top:860px" width="700" height="60" viewBox="0 860 700 60">
  <polyline points="372.5,884.5 376.5,888.5 380.5,884.5" fill="none" stroke="#c0c4cc" stroke-width="1"/>
  <polyline points="445.5,882.5 441.5,886.5 445.5,890.5" fill="none" stroke="#c0c4cc" stroke-width="1.3"/>
  <polyline points="521.5,882.5 525.5,886.5 521.5,890.5" fill="none" stroke="#c0c4cc" stroke-width="1.3"/>
</svg>
<div class="abs" style="left:469px;top:873px;width:30px;height:28px;border-radius:2px;background:#02aca9;color:#fff;font-weight:bold;font-size:13px;line-height:28px;text-align:center">1</div>
<div class="abs" style="left:568px;top:878px;font-size:13px;line-height:17px;color:#3a4466;white-space:nowrap">前往</div>
<div class="abs" style="left:598px;top:873px;width:46px;height:28px;border:1px solid #dcdfe6;border-radius:3px;font-size:13px;line-height:26px;color:#3a4466;text-align:center">1</div>
<div class="abs" style="left:648px;top:878px;font-size:13px;line-height:17px;color:#3a4466;white-space:nowrap">页</div>
</body></html>
